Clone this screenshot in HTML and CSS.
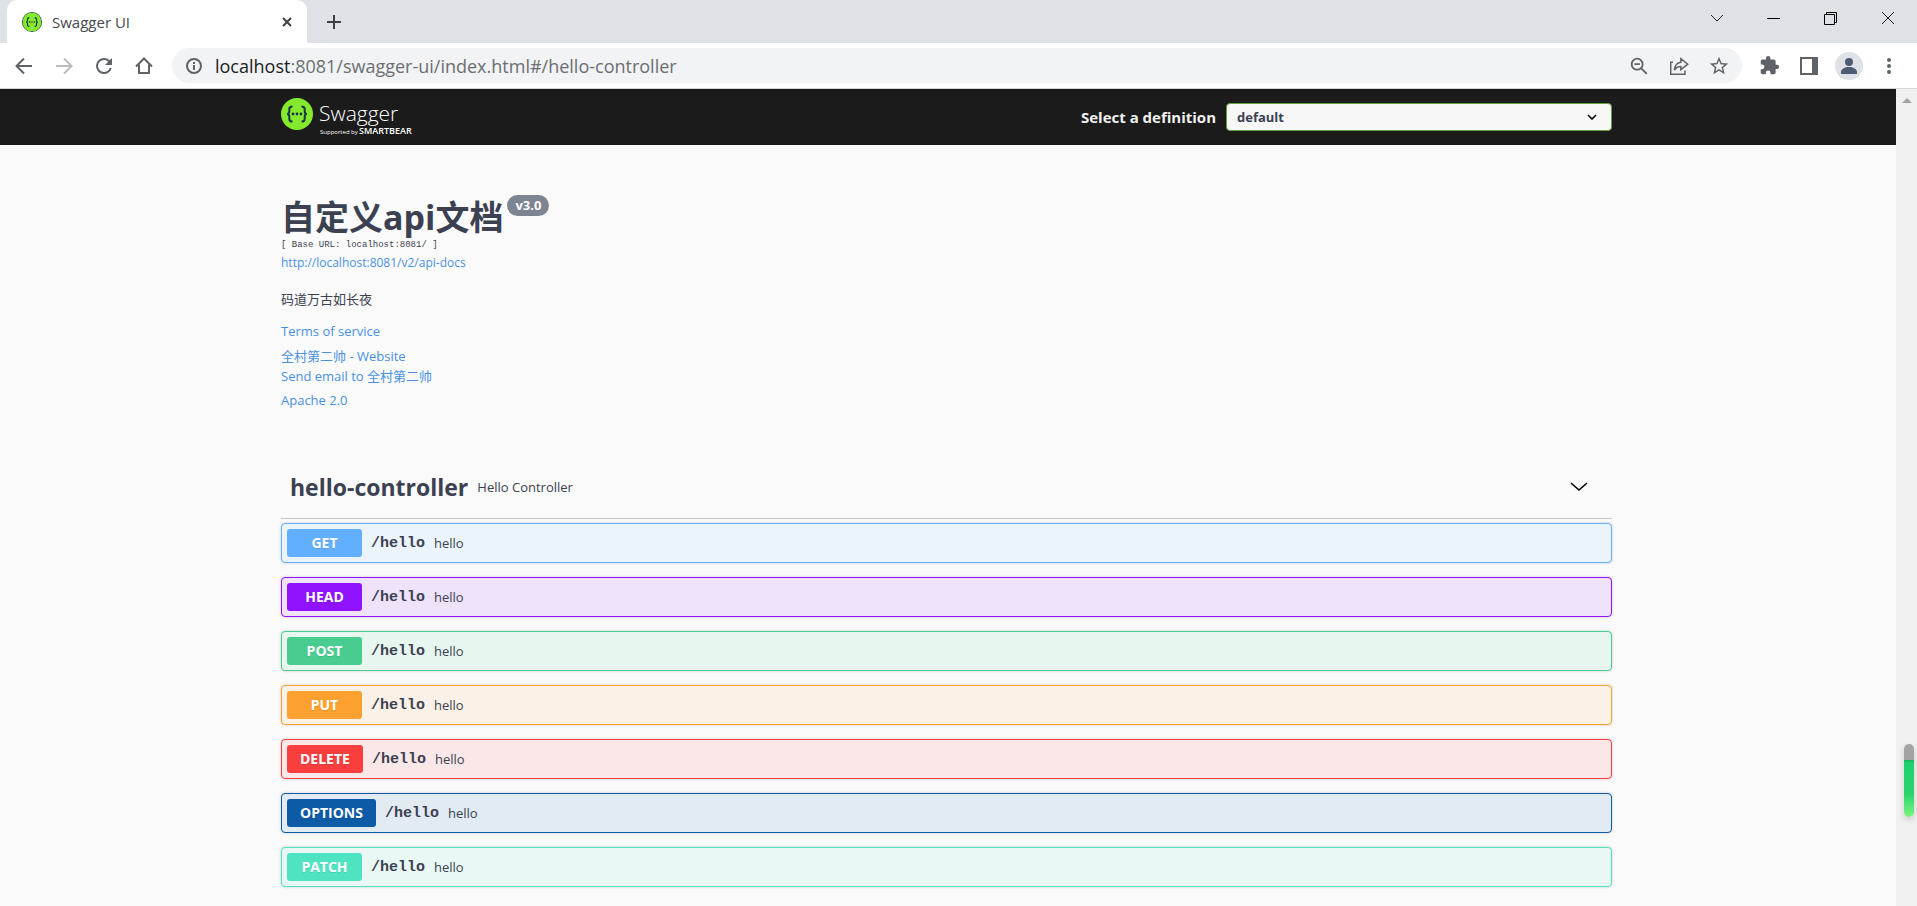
FILE: index.html
```html
<!DOCTYPE html>
<html lang="zh-CN">
<head>
<meta charset="UTF-8">
<meta name="viewport" content="width=device-width, initial-scale=1.0">
<title>Swagger UI</title>
<link rel="stylesheet" href="styles.css">
</head>
<body>

<svg width="0" height="0" class="defs" aria-hidden="true">
    <symbol id="swagger-mark" viewBox="0 0 32 32">
        <circle cx="16" cy="16" r="16" fill="#85ea2d"/>
        <g fill="none" stroke="#173647" stroke-width="2">
            <path d="M11.500 8.500c-2.500 0-3.200.8-3.200 2.600v2.200c0 1.700-.6 2.700-2.200 2.700 1.600 0 2.200 1 2.200 2.700v2.200c0 1.800.7 2.600 3.200 2.600"/>
            <path d="M20.500 8.500c2.500 0 3.200.8 3.200 2.600v2.200c0 1.700.6 2.700 2.200 2.700-1.600 0-2.200 1-2.200 2.700v2.200c0 1.800-.7 2.600-3.200 2.600"/>
        </g>
        <g fill="#173647">
            <circle cx="12" cy="16" r="1.400"/>
            <circle cx="16" cy="16" r="1.400"/>
            <circle cx="20" cy="16" r="1.400"/>
        </g>
    </symbol>
</svg>

<header class="browser">
    <div class="tab-strip">
        <div class="tab">
            <svg class="favicon" viewBox="-1 -1 34 34"><circle cx="16" cy="16" r="17" fill="#173647"/><use href="#swagger-mark" width="32" height="32"/></svg>
            <span class="tab-title">Swagger UI</span>
            <button class="icon-button tab-close" aria-label="Close tab">
                <svg width="12" height="12" viewBox="0 0 12 12"><path d="M2 2l8 8M10 2l-8 8" stroke="#3c4043" stroke-width="2"/></svg>
            </button>
        </div>
        <button class="icon-button new-tab" aria-label="New tab">
            <svg width="16" height="16" viewBox="0 0 16 16"><path d="M8 1v14M1 8h14" stroke="#3c4043" stroke-width="2"/></svg>
        </button>
        <div class="window-buttons">
            <button class="icon-button" aria-label="Search tabs">
                <svg width="14" height="14" viewBox="0 0 14 14"><path d="M1 4l6 6 6-6" fill="none" stroke="#222"/></svg>
            </button>
            <button class="icon-button" aria-label="Minimize">
                <svg width="14" height="14" viewBox="0 0 14 14"><path d="M0 7.500h13" stroke="#000"/></svg>
            </button>
            <button class="icon-button" aria-label="Restore">
                <svg width="14" height="14" viewBox="0 0 14 14"><path d="M.5 3.500h10v10h-10zM2.500 3.500v-2h10v10h-2" fill="none" stroke="#000"/></svg>
            </button>
            <button class="icon-button" aria-label="Close">
                <svg width="14" height="14" viewBox="0 0 14 14"><path d="M1 1l12 12M13 1L1 13" stroke="#222"/></svg>
            </button>
        </div>
    </div>
    <div class="toolbar">
        <div class="nav-buttons">
            <button class="icon-button" aria-label="Back">
                <svg width="24" height="24" viewBox="0 0 24 24"><path d="M20 12H5M12 4.500L4.500 12l7.500 7.500" fill="none" stroke="#5f6368" stroke-width="2"/></svg>
            </button>
            <button class="icon-button" aria-label="Forward">
                <svg width="24" height="24" viewBox="0 0 24 24"><path d="M4 12h15M12 4.500l7.500 7.500-7.500 7.500" fill="none" stroke="#babcbe" stroke-width="2"/></svg>
            </button>
            <button class="icon-button" aria-label="Reload">
                <svg width="24" height="24" viewBox="0 0 24 24"><path d="M17.650 6.350A7.950 7.950 0 0 0 12 4a8 8 0 1 0 7.730 10h-2.080A6 6 0 1 1 12 6c1.660 0 3.140.69 4.220 1.780L13 11h7V4z" fill="#5f6368"/></svg>
            </button>
            <button class="icon-button" aria-label="Home">
                <svg width="24" height="24" viewBox="0 0 24 24"><path d="M4 12.500L12 4.500l8 8M7 10.500V19h10v-8.500" fill="none" stroke="#5f6368" stroke-width="2"/></svg>
            </button>
        </div>
        <div class="address-bar">
            <svg width="18" height="18" viewBox="0 0 18 18"><circle cx="9" cy="9" r="7" fill="none" stroke="#5f6368" stroke-width="2"/><path d="M9 8v5M9 5v2" stroke="#5f6368" stroke-width="2"/></svg>
            <span class="url"><span class="host">localhost</span>:8081/swagger-ui/index.html#/hello-controller</span>
            <div class="tool-buttons">
                <button class="icon-button" aria-label="Zoom">
                    <svg width="22" height="22" viewBox="0 0 24 24"><circle cx="10" cy="10" r="6" fill="none" stroke="#5f6368" stroke-width="2"/><path d="M7 10h6M14.500 14.500l6 6" stroke="#5f6368" stroke-width="2"/></svg>
                </button>
                <button class="icon-button" aria-label="Share">
                    <svg width="22" height="22" viewBox="0 0 24 24"><path d="M5.500 8H3v13h15.500v-4M14 4l7.500 6-7.500 6v-3.500c-3 0-5 1-7 4 .5-4.500 3-8 7-8.500z" fill="none" stroke="#5f6368" stroke-width="1.600"/></svg>
                </button>
                <button class="icon-button" aria-label="Bookmark">
                    <svg width="22" height="22" viewBox="0 0 24 24"><path d="M22 9.240l-7.190-.62L12 2 9.190 8.630 2 9.240l5.460 4.730L5.820 21 12 17.270 18.180 21l-1.630-7.030zM12 15.400l-3.760 2.270 1-4.280-3.320-2.880 4.380-.38L12 6.100l1.710 4.040 4.380.38-3.320 2.880 1 4.280z" fill="#5f6368"/></svg>
                </button>
            </div>
        </div>
        <div class="tool-buttons">
            <button class="icon-button" aria-label="Extensions">
                <svg width="21" height="21" viewBox="0 0 24 24"><path d="M20.500 11H19V7a2 2 0 0 0-2-2h-4V3.500a2.500 2.500 0 0 0-5 0V5H4a2 2 0 0 0-2 2v3.800h1.500a2.700 2.700 0 0 1 0 5.400H2V20c0 1.100.9 2 2 2h3.800v-1.500a2.700 2.700 0 0 1 5.400 0V22H17a2 2 0 0 0 2-2v-4h1.500a2.500 2.500 0 0 0 0-5z" fill="#5f6368"/></svg>
            </button>
            <button class="icon-button" aria-label="Side panel">
                <svg width="18" height="18" viewBox="0 0 18 18"><path d="M0 0h18v18H0zM2 2v14h10V2z" fill="#5f6368" fill-rule="evenodd"/></svg>
            </button>
            <button class="icon-button" aria-label="Profile">
                <svg width="28" height="28" viewBox="0 0 28 28"><circle cx="14" cy="14" r="14" fill="#dee1e6"/><circle cx="14" cy="10" r="4" fill="#4d5b73"/><path d="M6 22v-2c0-3 4-5 8-5s8 2 8 5v2z" fill="#4d5b73"/></svg>
            </button>
            <button class="icon-button" aria-label="Menu">
                <svg width="4" height="18" viewBox="0 0 4 18"><circle cx="2" cy="3" r="2" fill="#5f6368"/><circle cx="2" cy="9" r="2" fill="#5f6368"/><circle cx="2" cy="15" r="2" fill="#5f6368"/></svg>
            </button>
        </div>
    </div>
</header>

<div class="viewport">
    <main class="swagger-ui">
        <div class="topbar">
            <div class="wrapper topbar-wrapper">
                <a class="link" href="#" aria-label="Swagger">
                    <svg width="136" height="40" viewBox="0 0 136 40">
                        <use href="#swagger-mark" x="0" y="1" width="32" height="32"/>
                        <g class="logo-text">
                            <text x="38" y="24" class="logo-name">Swagger</text>
                            <text x="39" y="37" class="logo-small">Supported by</text>
                            <text x="78" y="37" class="logo-brand">SMARTBEAR</text>
                        </g>
                    </svg>
                </a>
                <label class="select-label" for="select">Select a definition</label>
                <select id="select">
                    <option>default</option>
                </select>
            </div>
        </div>

        <div class="wrapper">
            <section class="info">
                <h1 class="title">自定义api文档<span class="version">v3.0</span></h1>
                <pre class="base-url">[ Base URL: localhost:8081/ ]</pre>
                <a class="docs-link" href="#">http://localhost:8081/v2/api-docs</a>
                <p class="description">码道万古如长夜</p>
                <a class="terms" href="#">Terms of service</a>
                <div class="contact">
                    <a href="#">全村第二帅 - Website</a>
                    <a href="#">Send email to 全村第二帅</a>
                </div>
                <a class="license" href="#">Apache 2.0</a>
            </section>

            <section class="tag-section">
                <div class="tag-header">
                    <h3 class="tag">hello-controller</h3>
                    <small>Hello Controller</small>
                    <button class="icon-button expand" aria-label="Collapse operation">
                        <svg width="18" height="12" viewBox="0 0 18 12"><path d="M1 2l8 7 8-7" fill="none" stroke="#000" stroke-width="1.600"/></svg>
                    </button>
                </div>
                <div class="operations">
                    <button class="opblock get"><span class="method">GET</span><span class="path">/hello</span><span class="summary">hello</span></button>
                    <button class="opblock head"><span class="method">HEAD</span><span class="path">/hello</span><span class="summary">hello</span></button>
                    <button class="opblock post"><span class="method">POST</span><span class="path">/hello</span><span class="summary">hello</span></button>
                    <button class="opblock put"><span class="method">PUT</span><span class="path">/hello</span><span class="summary">hello</span></button>
                    <button class="opblock delete"><span class="method">DELETE</span><span class="path">/hello</span><span class="summary">hello</span></button>
                    <button class="opblock options"><span class="method">OPTIONS</span><span class="path">/hello</span><span class="summary">hello</span></button>
                    <button class="opblock patch"><span class="method">PATCH</span><span class="path">/hello</span><span class="summary">hello</span></button>
                </div>
            </section>
        </div>
    </main>
    <div class="scrollbar">
        <svg width="10" height="6" viewBox="0 0 10 6"><path d="M5 0l5 5H0z" fill="#a3a3a3"/></svg>
        <div class="meter"></div>
    </div>
</div>

</body>
</html>
```

FILE: styles.css
```css
* {
    box-sizing: border-box;
}

body {
    margin: 0;
    min-height: 100vh;
    display: flex;
    flex-direction: column;
    font-family: "Open Sans", "Noto Sans CJK SC", sans-serif;
    color: #3b4151;
    background: #fafafa;
}

button {
    font-family: inherit;
    color: inherit;
}

a {
    color: #4990e2;
    text-decoration: none;
}

svg {
    display: block;
}

.defs {
    position: absolute;
}

.icon-button {
    display: flex;
    align-items: center;
    justify-content: center;
    padding: 0;
    border: none;
    background: none;
}

/* browser frame */
.tab-strip {
    display: flex;
    align-items: center;
    height: 43px;
    padding-left: 7px;
    background: #dee1e6;
}

.tab {
    display: flex;
    align-items: center;
    width: 300px;
    height: 43px;
    padding: 0 14px 0 15px;
    border-radius: 10px 10px 0 0;
    background: #fff;
}

.favicon {
    width: 20px;
    height: 20px;
}

.tab-title {
    margin-left: 10px;
    font-size: 15px;
    color: #45494d;
}

.tab-close {
    margin-left: auto;
}

.new-tab {
    margin-left: 19px;
}

.window-buttons {
    display: flex;
    align-self: flex-start;
    margin-left: auto;
    margin-right: 1px;
    height: 36px;
}

.window-buttons .icon-button {
    width: 57px;
}

.toolbar {
    display: flex;
    align-items: center;
    height: 46px;
    padding: 0 14px 0 12px;
    background: #fff;
    border-bottom: 1px solid #d5d7da;
}

.nav-buttons {
    display: flex;
    gap: 16px;
}

.address-bar {
    flex: 1;
    display: flex;
    align-items: center;
    gap: 12px;
    height: 35px;
    margin: 0 13px 0 16px;
    padding: 0 9px 0 13px;
    border-radius: 18px;
    background: #f1f3f4;
}

.url {
    flex: 1;
    font-size: 18px;
    line-height: 24px;
    color: #6b6f73;
}

.host {
    color: #202124;
}

.tool-buttons {
    display: flex;
    align-items: center;
    gap: 12px;
}

.tool-buttons .icon-button {
    width: 28px;
}

/* page */
.viewport {
    flex: 1;
    display: flex;
}

.swagger-ui {
    flex: 1;
}

.wrapper {
    width: 100%;
    max-width: 1372px;
    margin: 0 auto;
    padding: 0 22px 0 19px;
}

.topbar {
    background: #1b1b1b;
}

.topbar-wrapper {
    display: flex;
    align-items: center;
    height: 56px;
}

.link {
    margin-right: auto;
}

.logo-text {
    fill: #fff;
}

.logo-name {
    font-size: 21px;
    font-weight: 300;
}

.logo-small {
    font-size: 6px;
}

.logo-brand {
    font-size: 9px;
    font-weight: 600;
}

.select-label {
    font-size: 15px;
    font-weight: 700;
    color: #f0f0f0;
}

#select {
    width: 29%;
    height: 28px;
    margin-left: 10px;
    padding: 0 10px;
    border: 1px solid #62a03f;
    border-radius: 4px;
    font-family: inherit;
    font-size: 13px;
    font-weight: 700;
    color: #3b4151;
    background: #f7f7f7 url("data:image/svg+xml,%3Csvg xmlns='http://www.w3.org/2000/svg' viewBox='0 0 10 6'%3E%3Cpath d='M1 1l4 4 4-4' fill='none' stroke='%23000' stroke-width='1.600'/%3E%3C/svg%3E") no-repeat right 14px center;
    background-size: 10px 6px;
    appearance: none;
}

.info {
    display: flex;
    flex-direction: column;
    align-items: flex-start;
    padding-top: 50px;
    font-size: 13px;
    line-height: 20px;
}

.title {
    display: flex;
    align-items: flex-start;
    margin: 0;
    font-size: 34px;
    line-height: 44px;
}

.version {
    margin-left: 4px;
    padding: 0 8px;
    border-radius: 20px;
    font-size: 13px;
    line-height: 21px;
    color: #fff;
    background: #7d8492;
}

.base-url {
    margin: 0;
    font-family: "Liberation Mono", monospace;
    font-size: 9px;
    line-height: 13px;
}

.docs-link {
    font-size: 12px;
    line-height: 22px;
}

.description {
    margin: 15px 0 12px;
}

.contact {
    display: flex;
    flex-direction: column;
    margin: 5px 0 4px;
}

.tag-section {
    padding-top: 46px;
}

.tag-header {
    display: flex;
    align-items: center;
    height: 63px;
    padding: 0 24px 0 9px;
    border-bottom: 1px solid #c2c4c8;
}

.tag {
    margin: 0;
    font-size: 23px;
}

.tag-header small {
    margin-left: 9px;
    font-size: 13px;
}

.expand {
    margin-left: auto;
}

.operations {
    display: flex;
    flex-direction: column;
    gap: 14px;
    padding: 4px 0 20px;
}

.opblock {
    display: flex;
    align-items: center;
    height: 40px;
    padding: 0 5px;
    border: 1px solid;
    border-radius: 4px;
    box-shadow: 0 0 3px rgba(0, 0, 0, .19);
    text-align: left;
}

.method {
    min-width: 75px;
    padding: 0 13px;
    border-radius: 3px;
    font-size: 14px;
    font-weight: 700;
    line-height: 28px;
    text-align: center;
    text-shadow: 0 1px 0 rgba(0, 0, 0, .1);
    color: #fff;
}

.path {
    margin-left: 9px;
    font-family: "Liberation Mono", monospace;
    font-size: 15px;
    font-weight: 700;
    color: #3b4151;
}

.summary {
    margin-left: 9px;
    font-size: 13px;
    color: #3b4151;
}

.get { border-color: #61affe; background: #ebf3fb; }
.get .method { background: #61affe; }
.head { border-color: #9012fe; background: #efe2fb; }
.head .method { background: #9012fe; }
.post { border-color: #49cc90; background: #e8f6f0; }
.post .method { background: #49cc90; }
.put { border-color: #fca130; background: #fbf1e6; }
.put .method { background: #fca130; }
.delete { border-color: #f93e3e; background: #fae7e7; }
.delete .method { background: #f93e3e; }
.options { border-color: #0d5aa7; background: #e2eaf2; }
.options .method { background: #0d5aa7; }
.patch { border-color: #50e3c2; background: #e9f8f5; }
.patch .method { background: #50e3c2; }

.scrollbar {
    display: flex;
    flex-direction: column;
    align-items: center;
    justify-content: space-between;
    width: 21px;
    padding: 9px 0 90px;
    background: #f0f0f0;
}

.meter {
    width: 10px;
    height: 73px;
    margin-left: 5px;
    border-radius: 5px;
    background: linear-gradient(#a3a3a3 16px, #18b360 16px, #1fd070 19px, #2ad46c 50px, #7ff57f);
    box-shadow: 0 3px 6px rgba(0, 0, 0, .15);
}
```
